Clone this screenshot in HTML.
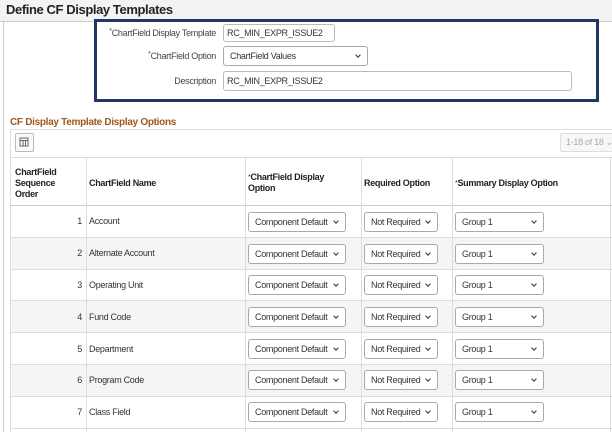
<!DOCTYPE html>
<html><head><meta charset="utf-8"><style>
*{box-sizing:border-box;margin:0;padding:0}
body{width:612px;height:432px;overflow:hidden;background:#fff;font-family:"Liberation Sans",Arial,sans-serif;color:#333;position:relative;font-size:9px;letter-spacing:-0.3px}
.a{position:absolute;white-space:nowrap}
.title{left:6px;top:2px;font-size:13px;font-weight:bold;color:#222;letter-spacing:-0.4px}
.lbl{position:absolute;right:396px;font-size:9px;color:#444;white-space:nowrap}
.inp{position:absolute;border:1px solid #bbb;border-radius:3px;background:#fff;font-size:9px;color:#333;padding-left:3px;line-height:17px;white-space:nowrap;overflow:hidden}
.sel{position:absolute;border:1px solid #a9a9a9;border-radius:3px;background:#fff;font-size:9px;color:#333;padding-left:6px;line-height:18px;height:20px;white-space:nowrap}
.sel:after{content:"";position:absolute;right:7px;top:6px;width:3px;height:3px;border-right:1.5px solid #333;border-bottom:1.5px solid #333;transform:rotate(45deg)}
.vl{position:absolute;width:1px;background:#ddd;top:158px;height:274px}
.hl{position:absolute;left:10px;width:602px;height:1px;background:#ddd}
.th{position:absolute;font-weight:bold;font-size:9px;color:#222;line-height:11px;white-space:nowrap}
.num{position:absolute;left:60px;width:22px;text-align:right;font-size:9px}
.nm{position:absolute;left:89px;font-size:9px;white-space:nowrap}
</style></head><body>
<div class="a" style="left:0;top:0;width:612px;height:21px;background:#f3f3f3"></div>
<div class="a" style="left:0;top:21px;width:612px;height:1px;background:#ccc"></div>
<div class="a" style="left:3px;top:22px;width:1px;height:410px;background:#ccc"></div>
<div class="a title">Define CF Display Templates</div>

<div class="a" style="left:94px;top:19px;width:505px;height:83px;border:3px solid #1f3867"></div>
<div class="lbl" style="top:28px"><span style="font-size:7px;vertical-align:top">*</span>ChartField Display Template</div>
<div class="inp" style="left:223px;top:24px;width:112px;height:18px">RC_MIN_EXPR_ISSUE2</div>
<div class="lbl" style="top:51px"><span style="font-size:7px;vertical-align:top">*</span>ChartField Option</div>
<div class="sel" style="left:223px;top:46px;width:145px">ChartField Values</div>
<div class="lbl" style="top:76px">Description</div>
<div class="inp" style="left:223px;top:71px;width:349px;height:20px;line-height:18px">RC_MIN_EXPR_ISSUE2</div>

<div class="a" style="left:10px;top:117px;font-size:10px;font-weight:bold;color:#9b5a1a">CF Display Template Display Options</div>
<div class="a" style="left:10px;top:129px;width:602px;height:1px;background:#ddd"></div>
<div class="a" style="left:10px;top:129px;width:1px;height:303px;background:#ddd"></div>
<div class="a" style="left:15px;top:133px;width:19px;height:19px;border:1px solid #bbb;border-radius:2px;background:#fafafa">
<svg width="17" height="17" viewBox="0 0 17 17" style="position:absolute;left:0;top:0"><rect x="4" y="4" width="8" height="8" fill="none" stroke="#666" stroke-width="1"/><line x1="4" y1="6.5" x2="12" y2="6.5" stroke="#666"/><line x1="7" y1="6.5" x2="7" y2="12" stroke="#666"/><line x1="9.5" y1="6.5" x2="9.5" y2="12" stroke="#666"/></svg></div>
<div class="a" style="left:560px;top:133px;width:60px;height:19px;border:1px solid #ddd;border-radius:2px;background:#f7f7f7;color:#aaa;font-size:9px;line-height:17px;padding-left:5px">1-18 of 18 ⌄</div>

<div class="hl" style="top:157px"></div>
<div class="hl" style="top:205px;background:#ccc"></div>
<div class="a" style="left:11px;top:238px;width:600px;height:31px;background:#f6f5f3"></div>
<div class="a" style="left:11px;top:301px;width:600px;height:31px;background:#f6f5f3"></div>
<div class="a" style="left:11px;top:364px;width:600px;height:32px;background:#f6f5f3"></div>
<div class="hl" style="top:237px"></div><div class="hl" style="top:269px"></div><div class="hl" style="top:300px"></div><div class="hl" style="top:332px"></div><div class="hl" style="top:364px"></div><div class="hl" style="top:396px"></div><div class="hl" style="top:428px"></div>
<div class="vl" style="left:86px"></div><div class="vl" style="left:245px"></div><div class="vl" style="left:361px"></div><div class="vl" style="left:452px"></div><div class="vl" style="left:610px"></div>

<div class="th" style="left:15px;top:167px">ChartField<br>Sequence<br>Order</div>
<div class="th" style="left:89px;top:178px">ChartField Name</div>
<div class="th" style="left:248px;top:172px"><span style="font-weight:normal;font-size:7px;vertical-align:top">*</span>ChartField Display<br>Option</div>
<div class="th" style="left:364px;top:178px">Required Option</div>
<div class="th" style="left:455px;top:178px"><span style="font-weight:normal;font-size:7px;vertical-align:top">*</span>Summary Display Option</div>

<div class="num" style="top:216px">1</div><div class="nm" style="top:216px">Account</div>
<div class="num" style="top:248px">2</div><div class="nm" style="top:248px">Alternate Account</div>
<div class="num" style="top:280px">3</div><div class="nm" style="top:280px">Operating Unit</div>
<div class="num" style="top:312px">4</div><div class="nm" style="top:312px">Fund Code</div>
<div class="num" style="top:344px">5</div><div class="nm" style="top:344px">Department</div>
<div class="num" style="top:375px">6</div><div class="nm" style="top:375px">Program Code</div>
<div class="num" style="top:407px">7</div><div class="nm" style="top:407px">Class Field</div>

<div class="sel" style="left:248px;top:212px;width:98px">Component Default</div><div class="sel" style="left:364px;top:212px;width:74px">Not Required</div><div class="sel" style="left:455px;top:212px;width:89px">Group 1</div>
<div class="sel" style="left:248px;top:244px;width:98px">Component Default</div><div class="sel" style="left:364px;top:244px;width:74px">Not Required</div><div class="sel" style="left:455px;top:244px;width:89px">Group 1</div>
<div class="sel" style="left:248px;top:275px;width:98px">Component Default</div><div class="sel" style="left:364px;top:275px;width:74px">Not Required</div><div class="sel" style="left:455px;top:275px;width:89px">Group 1</div>
<div class="sel" style="left:248px;top:307px;width:98px">Component Default</div><div class="sel" style="left:364px;top:307px;width:74px">Not Required</div><div class="sel" style="left:455px;top:307px;width:89px">Group 1</div>
<div class="sel" style="left:248px;top:339px;width:98px">Component Default</div><div class="sel" style="left:364px;top:339px;width:74px">Not Required</div><div class="sel" style="left:455px;top:339px;width:89px">Group 1</div>
<div class="sel" style="left:248px;top:370px;width:98px">Component Default</div><div class="sel" style="left:364px;top:370px;width:74px">Not Required</div><div class="sel" style="left:455px;top:370px;width:89px">Group 1</div>
<div class="sel" style="left:248px;top:402px;width:98px">Component Default</div><div class="sel" style="left:364px;top:402px;width:74px">Not Required</div><div class="sel" style="left:455px;top:402px;width:89px">Group 1</div>
</body></html>
